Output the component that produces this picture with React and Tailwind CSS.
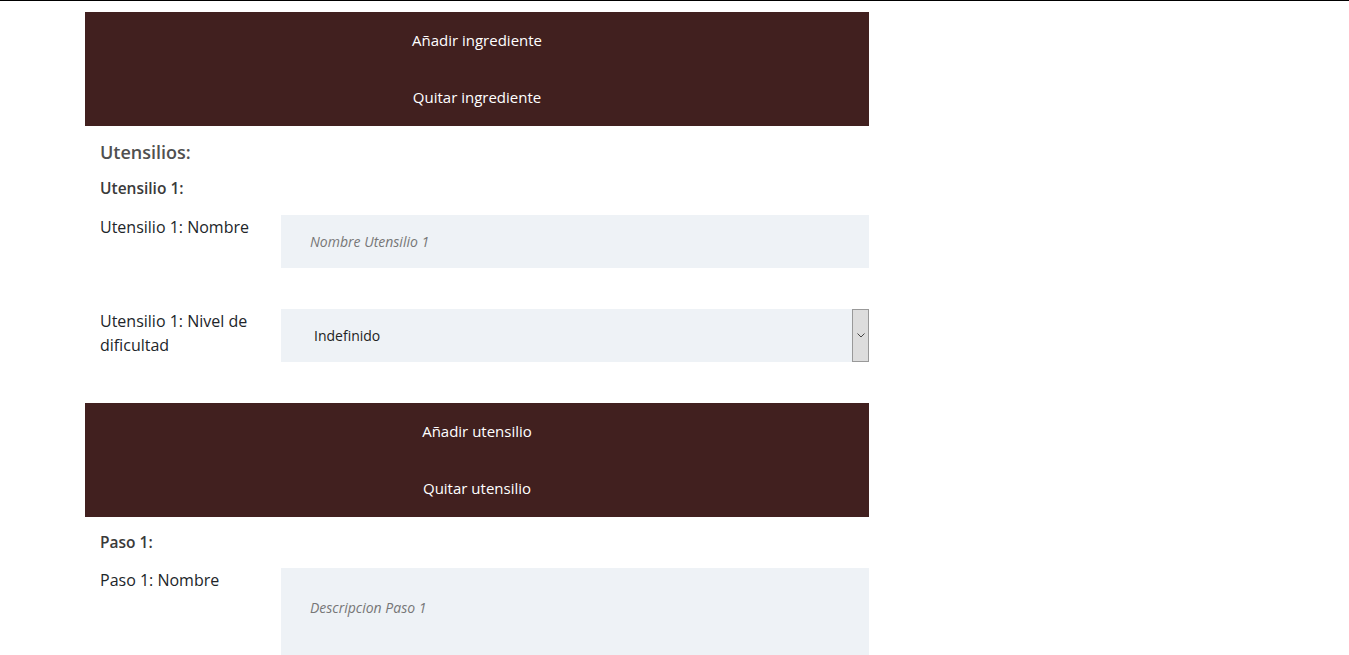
export default function App() {
  const font = { fontFamily: '"Open Sans", "Liberation Sans", sans-serif' };
  return (
    <div className="h-[655px] overflow-hidden bg-white border-t border-black text-[#212529]" style={font}>
      <div className="w-[784px] ml-[85px] pt-[11px]">
        <div className="bg-[#41201f] flex flex-col">
          <button className="h-[57px] text-white text-[15px]">Añadir ingrediente</button>
          <button className="h-[57px] text-white text-[15px]">Quitar ingrediente</button>
        </div>

        <div className="px-[15px] pt-[14px]">
          <h3 className="text-[18px] font-semibold text-[#505050] leading-[24px]">Utensilios:</h3>
          <h4 className="text-[15.5px] font-semibold text-[#3a3a3a] leading-[22px] mt-[13px]">Utensilio 1:</h4>
        </div>

        <div className="flex mt-[16px]">
          <label className="w-[196px] pl-[15px] pr-[10px] text-[16px] leading-[24px]">Utensilio 1: Nombre</label>
          <input
            className="flex-1 h-[53px] bg-[#eef2f6] px-[29px] text-[14px] italic placeholder:text-[#777] outline-none"
            placeholder="Nombre Utensilio 1"
          />
        </div>

        <div className="flex mt-[41px]">
          <label className="w-[196px] pl-[15px] pr-[10px] text-[16px] leading-[24px]">Utensilio 1: Nivel de dificultad</label>
          <div className="flex-1 h-[53px] bg-[#eef2f6] flex items-center">
            <span className="flex-1 pl-[33px] text-[14px] text-[#222]">Indefinido</span>
            <span className="w-[17px] h-[53px] bg-[#dddddd] border border-[#999] flex items-center justify-center">
              <svg width="8" height="5" viewBox="0 0 8 5" fill="none" stroke="#444" strokeWidth="1">
                <path d="M0.5 0.5 L4 4 L7.5 0.5" />
              </svg>
            </span>
          </div>
        </div>

        <div className="bg-[#41201f] flex flex-col mt-[41px]">
          <button className="h-[57px] text-white text-[15px]">Añadir utensilio</button>
          <button className="h-[57px] text-white text-[15px]">Quitar utensilio</button>
        </div>

        <div className="px-[15px] pt-[14px]">
          <h4 className="text-[15.5px] font-semibold text-[#3a3a3a] leading-[22px]">Paso 1:</h4>
        </div>

        <div className="flex mt-[15px]">
          <label className="w-[196px] pl-[15px] pr-[10px] text-[16px] leading-[24px]">Paso 1: Nombre</label>
          <textarea
            className="flex-1 h-[120px] bg-[#eef2f6] px-[29px] pt-[29px] text-[14px] italic placeholder:text-[#777] outline-none resize-none"
            placeholder="Descripcion Paso 1"
          />
        </div>
      </div>
    </div>
  );
}
